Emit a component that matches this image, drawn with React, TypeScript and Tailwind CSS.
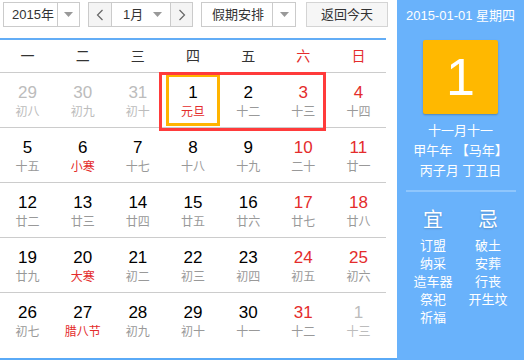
import React from 'react';

type Day = { d: number; l: string; other?: boolean; fest?: boolean };

const weeks: Day[][] = [
  [
    { d: 29, l: '初八', other: true },
    { d: 30, l: '初九', other: true },
    { d: 31, l: '初十', other: true },
    { d: 1, l: '元旦', fest: true },
    { d: 2, l: '十二' },
    { d: 3, l: '十三' },
    { d: 4, l: '十四' },
  ],
  [
    { d: 5, l: '十五' },
    { d: 6, l: '小寒', fest: true },
    { d: 7, l: '十七' },
    { d: 8, l: '十八' },
    { d: 9, l: '十九' },
    { d: 10, l: '二十' },
    { d: 11, l: '廿一' },
  ],
  [
    { d: 12, l: '廿二' },
    { d: 13, l: '廿三' },
    { d: 14, l: '廿四' },
    { d: 15, l: '廿五' },
    { d: 16, l: '廿六' },
    { d: 17, l: '廿七' },
    { d: 18, l: '廿八' },
  ],
  [
    { d: 19, l: '廿九' },
    { d: 20, l: '大寒', fest: true },
    { d: 21, l: '初二' },
    { d: 22, l: '初三' },
    { d: 23, l: '初四' },
    { d: 24, l: '初五' },
    { d: 25, l: '初六' },
  ],
  [
    { d: 26, l: '初七' },
    { d: 27, l: '腊八节', fest: true },
    { d: 28, l: '初九' },
    { d: 29, l: '初十' },
    { d: 30, l: '十一' },
    { d: 31, l: '十二' },
    { d: 1, l: '十三', other: true },
  ],
];

const weekdays = ['一', '二', '三', '四', '五', '六', '日'];
const yi = ['订盟', '纳采', '造车器', '祭祀', '祈福'];
const ji = ['破土', '安葬', '行丧', '开生坟'];

const Caret = () => (
  <svg width="9" height="5" viewBox="0 0 9 5"><path d="M0 0h9L4.5 5z" fill="#999" /></svg>
);

const Chevron = ({ dir }: { dir: 'l' | 'r' }) => (
  <svg width="8" height="12" viewBox="0 0 8 12">
    <path d={dir === 'l' ? 'M6.5 1L1.5 6l5 5' : 'M1.5 1l5 5-5 5'} fill="none" stroke="#666" strokeWidth="1.2" />
  </svg>
);

export default function App() {
  return (
    <div
      className="flex w-[524px] h-[360px] bg-white text-[#333]"
      style={{ fontFamily: '"Liberation Sans", "Noto Sans CJK SC", sans-serif' }}
    >
      {/* left: calendar */}
      <div className="w-[397px] flex flex-col border-b-2 border-[#5aaaf7]">
        <div className="h-[38px] flex items-start pt-[2px] pl-[3px] gap-[8px] text-[13px]">
          <div className="h-[25px] w-[77px] flex border border-[#cbcbcb] bg-white">
            <div className="w-[53px] flex items-center pl-[8px]">2015年</div>
            <div className="flex-1 flex items-center justify-center border-l border-[#cbcbcb]"><Caret /></div>
          </div>
          <div className="h-[25px] w-[105px] flex border border-[#cbcbcb]">
            <div className="w-[22px] flex items-center justify-center bg-[#f4f4f4]"><Chevron dir="l" /></div>
            <div className="w-[60px] flex items-center justify-between pl-[11px] pr-[8px] border-x border-[#cbcbcb]">
              <span>1月</span>
              <Caret />
            </div>
            <div className="flex-1 flex items-center justify-center bg-[#f4f4f4]"><Chevron dir="r" /></div>
          </div>
          <div className="h-[25px] w-[95px] flex border border-[#cbcbcb]">
            <div className="w-[70px] flex items-center pl-[10px]">假期安排</div>
            <div className="flex-1 flex items-center justify-center border-l border-[#cbcbcb]"><Caret /></div>
          </div>
          <div className="h-[25px] w-[82px] ml-[2px] flex items-center justify-center border border-[#d4d4d4] bg-[#f6f6f6]">
            返回今天
          </div>
        </div>
        <div className="w-[386px] flex-1 flex flex-col border-t-2 border-[#63adf6]">
          <div className="h-[32px] grid grid-cols-7 items-center text-[14px]">
            {weekdays.map((w, i) => (
              <div key={w} className={`text-center ${i >= 5 ? 'text-[#e42c2c]' : 'text-[#333]'}`}>{w}</div>
            ))}
          </div>
          <div className="relative">
            {weeks.map((week, r) => (
              <div key={r} className="h-[55px] grid grid-cols-7 border-t border-[#cccccc]">
                {week.map((day, c) => {
                  const weekend = c >= 5;
                  const num = day.other ? 'text-[#bcbcbc]' : weekend ? 'text-[#e42c2c]' : 'text-black';
                  const lunar = day.other ? 'text-[#bcbcbc]' : day.fest ? 'text-[#e42c2c]' : 'text-[#999]';
                  const today = r === 0 && c === 3;
                  return (
                    <div key={c} className="relative flex flex-col items-center pt-[10px]">
                      {today && <div className="absolute inset-x-[1px] top-[1px] bottom-[1px] border-[3px] border-[#ffb400]" />}
                      <div className={`text-[17px] leading-[20px] ${num}`}>{day.d}</div>
                      <div className={`text-[12px] leading-[18px] ${lunar}`}>{day.l}</div>
                    </div>
                  );
                })}
              </div>
            ))}
            <div className="absolute left-[159px] top-0 w-[167px] h-[59px] border-[3px] border-[#ff3b3b]" />
          </div>
        </div>
      </div>

      {/* right: detail panel */}
      <div className="flex-1 bg-[#69b2fb] text-white flex flex-col items-center">
        <div className="mt-[7px] text-[13px] leading-[18px]">2015-01-01 星期四</div>
        <div className="mt-[15px] w-[75px] h-[74px] bg-[#ffb800] rounded-[2px] shadow-[0_1px_2px_rgba(0,0,0,0.25)] flex items-center justify-center text-[52px] leading-none">
          1
        </div>
        <div className="mt-[7px] text-[13px] leading-[20px] text-center">
          <div>十一月十一</div>
          <div>甲午年 【马年】</div>
          <div>丙子月 丁丑日</div>
        </div>
        <div className="mt-[9px] w-[110px] h-[2px] bg-[#8fc6fc]" />
        <div className="mt-[16px] w-[110px] grid grid-cols-2 text-center">
          <div className="flex flex-col items-center">
            <div className="text-[20px] leading-[24px] [text-shadow:0_1px_2px_rgba(0,0,0,0.2)]">宜</div>
            <div className="mt-[5px] text-[13px] leading-[18px]">
              {yi.map((t) => <div key={t}>{t}</div>)}
            </div>
          </div>
          <div className="flex flex-col items-center">
            <div className="text-[20px] leading-[24px] [text-shadow:0_1px_2px_rgba(0,0,0,0.2)]">忌</div>
            <div className="mt-[5px] text-[13px] leading-[18px]">
              {ji.map((t) => <div key={t}>{t}</div>)}
            </div>
          </div>
        </div>
      </div>
    </div>
  );
}
